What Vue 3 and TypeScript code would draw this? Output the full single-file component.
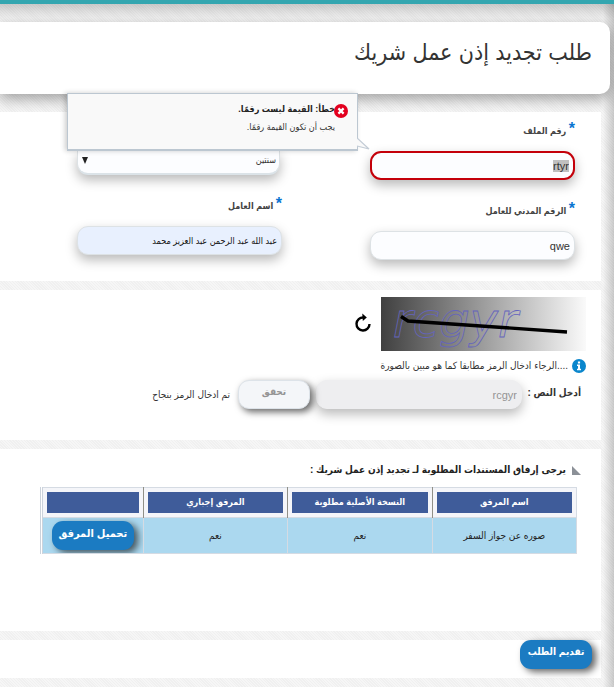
<script setup lang="ts">
import { onMounted, ref } from 'vue'

interface Attachment {
  name: string
  original: string
  required: string
}

const fileNumber = ref('rtyr')
const civilId = ref('qwe')
const workerName = ref('عبد الله عبد الرحمن عبد العزيز محمد')
const duration = ref('سنتين')
const captcha = ref('rcgyr')
const fileInput = ref<HTMLInputElement | null>(null)

const attachments: Attachment[] = [
  { name: 'صوره عن جواز السفر', original: 'نعم', required: 'نعم' },
]

onMounted(() => {
  fileInput.value?.focus()
  fileInput.value?.select()
})
</script>

<template>
  <div class="page" dir="rtl" lang="ar">
    <header class="masthead">
      <h1>طلب تجديد إذن عمل شريك</h1>
    </header>

    <main>
      <section class="panel fields">
        <div class="field">
          <label for="file-number"><span class="star">*</span> رقم الملف</label>
          <div class="control">
            <input id="file-number" ref="fileInput" v-model="fileNumber" class="box invalid" type="text" aria-describedby="file-error" />
            <div id="file-error" class="tip" role="alert">
              <svg class="tip-icon" viewBox="0 0 14 14" aria-hidden="true">
                <circle cx="7" cy="7" r="7" fill="#e3001f" />
                <path d="M4.4 4.4l5.2 5.2M9.6 4.4l-5.2 5.2" stroke="#fff" stroke-width="2.2" />
              </svg>
              <strong>خطأ: القيمة ليست رقمًا.</strong>
              <p>يجب أن تكون القيمة رقمًا.</p>
              <svg class="tip-tail" viewBox="0 0 14 16" aria-hidden="true">
                <path d="M0 3L12 14L0 11z" fill="#f9f9f9" />
                <path d="M0 3L12 14L0 11" fill="none" stroke="#c3ccd6" stroke-width="1.200" />
              </svg>
            </div>
          </div>
        </div>

        <div class="field picker">
          <div class="control">
            <select id="duration" v-model="duration" class="box" aria-label="المدة">
              <option>سنتين</option>
            </select>
            <svg class="arrow" viewBox="0 0 6 7" aria-hidden="true"><path d="M0 0h6L3 7z" fill="#222" /></svg>
          </div>
        </div>

        <div class="field">
          <label for="civil-id"><span class="star">*</span> الرقم المدني للعامل</label>
          <div class="control"><input id="civil-id" v-model="civilId" class="box" type="text" /></div>
        </div>

        <div class="field raised">
          <label for="worker-name"><span class="star">*</span> اسم العامل</label>
          <div class="control"><input id="worker-name" v-model="workerName" class="box filled" type="text" /></div>
        </div>
      </section>

      <section class="panel verify">
        <div class="captcha-row">
          <svg class="captcha" viewBox="0 0 205 54" role="img" aria-label="رمز التحقق">
            <defs>
              <linearGradient id="shade" x1="0" y1="0" x2="1" y2="0">
                <stop offset="0" stop-color="#404040" />
                <stop offset="1" stop-color="#fafafa" />
              </linearGradient>
            </defs>
            <rect width="205" height="54" fill="url(#shade)" />
            <text class="captcha-text" x="12" y="40">rcgyr</text>
            <path d="M20 19.500L27 24L186 35" fill="none" stroke="#000" stroke-width="3.400" />
          </svg>
          <button class="refresh" type="button" aria-label="تحديث الرمز">
            <svg viewBox="0 0 16 19" aria-hidden="true">
              <path d="M8.500 4.500A6.500 6.500 0 1 0 14.500 11" fill="none" stroke="#000" stroke-width="2.400" />
              <path d="M7.300 0.500L11.800 4.500L7.800 8z" fill="#000" />
            </svg>
          </button>
        </div>
        <p class="hint">
          <svg viewBox="0 0 14 14" aria-hidden="true">
            <circle cx="7" cy="7" r="7" fill="#0a86cc" />
            <path d="M5 5.600h3v4.200h1v1.400H5V9.800h1V7H5zM5.900 2.500h2.200v2H5.900z" fill="#fff" />
          </svg>
          <span>....الرجاء ادخال الرمز مطابقا كما هو مبين بالصورة</span>
        </p>
        <div class="entry">
          <label for="captcha-input">أدخل النص :</label>
          <input id="captcha-input" v-model="captcha" class="box locked" type="text" disabled />
          <button class="check" type="button" disabled>تحقق</button>
          <span class="result">تم ادخال الرمز بنجاح</span>
        </div>
      </section>

      <section class="panel files">
        <h2>
          <svg viewBox="0 0 9 9" aria-hidden="true"><path d="M0 0L9 9H0z" fill="#8b9097" /></svg>
          <span>يرجى إرفاق المستندات المطلوبة لـ تجديد إذن عمل شريك :</span>
        </h2>
        <table>
          <colgroup>
            <col class="wide" />
            <col class="wide" />
            <col class="wide" />
            <col />
          </colgroup>
          <thead>
            <tr>
              <th scope="col"><span>اسم المرفق</span></th>
              <th scope="col"><span>النسخة الأصلية مطلوبة</span></th>
              <th scope="col"><span>المرفق إجباري</span></th>
              <th scope="col"><span></span></th>
            </tr>
          </thead>
          <tbody>
            <tr v-for="item in attachments" :key="item.name">
              <td>{{ item.name }}</td>
              <td>{{ item.original }}</td>
              <td>{{ item.required }}</td>
              <td class="action"><button class="primary" type="button">تحميل المرفق</button></td>
            </tr>
          </tbody>
        </table>
      </section>

      <section class="panel submit">
        <button class="primary" type="submit">تقديم الطلب</button>
      </section>
    </main>
  </div>
</template>

<style>
body {
  background: repeating-linear-gradient(45deg, #f6f6f6 0 1px, #f0f0f0 1px 2px);
}
</style>

<style scoped>
* {
  box-sizing: border-box;
}

.page {
  min-height: 100vh;
  padding: 18px 4px 9px 0;
  overflow: hidden;
  border-top: 4px solid #34a6b0;
  background:
    linear-gradient(to bottom, rgba(0, 0, 0, 0.18), rgba(0, 0, 0, 0.02) 14px, transparent 20px),
    linear-gradient(to left, rgba(0, 0, 0, 0.18), transparent 11px);
  color: #333;
  font: 10px/16px "Liberation Sans", "DejaVu Sans Condensed", "DejaVu Sans", sans-serif;
}

.masthead {
  display: flex;
  align-items: center;
  height: 72px;
  padding: 0 18px 12px;
  border-radius: 0 10px 10px 0;
  background: #fff;
  box-shadow: 0 5px 14px rgba(0, 0, 0, 0.34);
}

h1 {
  margin: 0;
  color: #333;
  font-size: 23px;
  line-height: 36px;
  font-weight: 400;
}

main {
  position: relative;
  display: grid;
  gap: 9px;
  margin: 18px 9px 0 0;
}

.panel {
  background: #fff;
}

.fields {
  display: grid;
  grid-template-columns: 1fr 1fr;
  gap: 21px 11px;
  padding: 9px 26px 21px 0;
}

.field {
  display: flex;
  flex-direction: column;
  gap: 14px;
}

.field.picker {
  padding-top: 30px;
}

.field.raised {
  margin-top: -5px;
}

.field label {
  height: 16px;
  font-size: 9px;
  font-weight: 700;
  color: #444;
}

.star {
  color: #0b74d1;
  font-size: 16px;
  line-height: 16px;
}

.control {
  position: relative;
  width: 205px;
}

.box {
  display: block;
  width: 100%;
  height: 29px;
  padding: 0 4px;
  border: 1px solid #dde2e5;
  border-radius: 11px;
  outline: 0;
  background: #fcfdff;
  box-shadow: 0 5px 12px rgba(0, 0, 0, 0.28);
  color: #333;
  font-family: inherit;
  font-size: 11px;
}

.box.invalid {
  border: 2px solid #c4000a;
}

.box.invalid::selection {
  background: #c0c0c0;
  color: #333;
}

.box.filled {
  background: #e8f0fe;
  font-size: 9px;
  color: #111;
}

select.box {
  appearance: none;
  width: 203px;
  height: 24px;
  margin-inline-start: 2px;
  padding: 0 3px 5px;
  border-top: 0;
  border-bottom: 2px solid #dbe3e8;
  border-radius: 0 0 11px 11px;
  font-size: 9px;
}

.arrow {
  position: absolute;
  left: 5px;
  top: 6px;
  width: 6px;
  height: 7px;
}

.tip {
  position: absolute;
  right: 217px;
  bottom: 100%;
  z-index: 2;
  width: 291px;
  height: 58px;
  padding: 6px 22px;
  border: 1px solid #bcc7d1;
  border-bottom-width: 2px;
  background: #f9f9f9;
  box-shadow: -2px 0 5px rgba(0, 0, 0, 0.2);
  font-size: 9px;
  line-height: 18px;
}

.tip strong {
  display: block;
  color: #222;
}

.tip p {
  margin: 0;
}

.tip-icon {
  position: absolute;
  right: 9px;
  top: 10px;
  width: 14px;
  height: 14px;
}

.tip-tail {
  position: absolute;
  left: 100%;
  bottom: -2px;
  width: 14px;
  height: 16px;
}

.verify {
  padding: 7px 15px 31px;
}

.captcha-row {
  display: flex;
  align-items: center;
  gap: 10px;
}

.captcha {
  width: 205px;
  height: 54px;
}

.captcha-text {
  direction: ltr;
  fill: none;
  stroke: #6464bd;
  stroke-width: 0.8px;
  font: italic 48px "DejaVu Sans", sans-serif;
  text-anchor: start;
}

.refresh {
  width: 16px;
  height: 19px;
  margin-top: -4px;
  padding: 0;
  border: 0;
  background: none;
}

.refresh svg {
  display: block;
}

.hint {
  display: flex;
  align-items: center;
  gap: 4px;
  margin: 7px 0 6px;
}

.hint svg {
  width: 14px;
  height: 14px;
}

.entry {
  display: flex;
  align-items: center;
  padding-inline-start: 5px;
}

.entry label {
  width: 59px;
  padding-bottom: 3px;
  color: #333;
  font-weight: 700;
}

.box.locked {
  width: 206px;
  border-color: #eeeef0;
  background: #eeeef0;
  color: #949494;
}

.check {
  width: 72px;
  height: 29px;
  margin-inline: 6px 8px;
  padding: 0 0 5px;
  border: 1px solid #dde3e9;
  border-radius: 11px;
  background: #f4f6f9;
  box-shadow: 3px 3px 7px rgba(0, 0, 0, 0.6);
  color: #949494;
  font: inherit;
  font-weight: 700;
}

.files {
  padding: 13px 20px 77px 40px;
}

h2 {
  display: flex;
  align-items: center;
  gap: 6px;
  margin: 0 0 9px;
  color: #222;
  font-size: 10px;
  line-height: 16px;
}

h2 svg {
  width: 9px;
  height: 9px;
}

table {
  width: calc(100% - 4px);
  margin-inline-start: 4px;
  table-layout: fixed;
  border-collapse: collapse;
  border: 1px solid #d5dbe3;
  border-left: 3px double #ccd3dc;
}

.wide {
  width: 27%;
}

th {
  height: 30px;
  padding: 4px;
  border-left: 1px solid #909088;
  background: #f4f5f9;
  font-size: 9px;
}

th:last-child {
  border-left: 0;
}

th span {
  display: block;
  height: 21px;
  background: #3f5c9a;
  color: #fff;
  line-height: 21px;
}

td {
  height: 36px;
  padding: 0;
  border: 1px solid #d5dbe3;
  background: #abd8ef;
  color: #222;
  text-align: center;
}

.action {
  overflow: hidden;
}

.primary {
  height: 29px;
  padding: 0 0 6px;
  border: 0;
  border-radius: 11px;
  background: #1b7bc2;
  box-shadow: 4px 3px 7px rgba(0, 0, 0, 0.6);
  color: #fff;
  font: inherit;
  font-weight: 700;
}

.action .primary {
  width: 82px;
  font-size: 11px;
}

.submit {
  display: flex;
  height: 38px;
  padding: 0 9px;
}

.submit .primary {
  width: 72px;
}
</style>
